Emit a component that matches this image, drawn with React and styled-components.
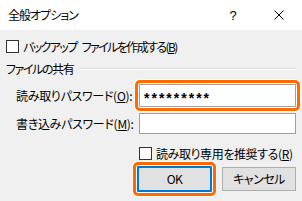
import React from "react";
import styled, { createGlobalStyle } from "styled-components";

const GlobalStyle = createGlobalStyle`
  html, body {
    margin: 0;
    padding: 0;
    background: #f0f0f0;
  }
  body {
    font-family: "Noto Sans CJK JP", "Noto Sans", sans-serif;
    font-size: 12px;
    color: #000;
    font-feature-settings: "palt";
  }
`;

const Window = styled.div`
  width: 302px;
  height: 201px;
  background: #f0f0f0;
  display: flex;
  flex-direction: column;
  overflow: hidden;
`;

const TitleBar = styled.div`
  height: 30px;
  background: #fff;
  display: flex;
  align-items: center;
  padding-left: 8px;
`;

const Title = styled.div`
  flex: 1;
  font-size: 12px;
  line-height: 16px;
  letter-spacing: -1px;
`;

const TitleButton = styled.div`
  width: 46px;
  height: 30px;
  display: flex;
  align-items: center;
  justify-content: center;
  font-family: "Liberation Sans", sans-serif;
  font-size: 13px;
`;

const Body = styled.div`
  padding: 10px 6px 0 6px;
  display: flex;
  flex-direction: column;
`;

const CheckRow = styled.div`
  display: flex;
  align-items: center;
  gap: 4px;
  height: 13px;
  margin-left: ${(p) => p.$indent || 0}px;
  margin-top: ${(p) => p.$top || 0}px;
  line-height: 13px;
  white-space: nowrap;
`;

const CheckText = styled.span`
  letter-spacing: ${(p) => p.$spacing ?? -0.4}px;
`;

const WordGap = styled.span`
  display: inline-block;
  width: 5px;
`;

const Box = styled.span`
  width: 13px;
  height: 13px;
  box-sizing: border-box;
  border: 1px solid #333;
  background: #fff;
  flex: none;
`;

const GroupHeader = styled.div`
  display: flex;
  align-items: center;
  gap: 6px;
  height: 14px;
  margin-top: 9px;
`;

const GroupTitle = styled.span`
  white-space: nowrap;
  line-height: 14px;
  letter-spacing: -1.4px;
`;

const GroupLine = styled.div`
  flex: 1;
  height: 1px;
  background: #dcdcdc;
  border-bottom: 1px solid #fff;
`;

const FormGrid = styled.div`
  display: grid;
  grid-template-columns: 123px 157px;
  row-gap: 6px;
  padding-left: 10px;
  margin-top: 8px;
  align-items: center;
`;

const FieldLabel = styled.span`
  white-space: nowrap;
  line-height: 16px;
  letter-spacing: -0.3px;
`;

const Field = styled.div`
  position: relative;
  height: ${(p) => p.$height || 22}px;
  box-sizing: border-box;
  border: 1px solid #a0a0a0;
  background: #fff;
  padding-left: 4px;
  display: flex;
  align-items: center;
  font-family: "Liberation Sans", sans-serif;
  font-size: 14px;
  font-weight: bold;
  letter-spacing: 2px;
  &::after {
    content: "";
    display: ${(p) => (p.$focused ? "block" : "none")};
    position: absolute;
    inset: -5px;
    border: 3px solid #ff6a00;
    border-radius: 5px;
    box-shadow: 0 0 0 1px #fff, inset 0 0 0 1px #fff;
    pointer-events: none;
  }
`;

const Stars = styled.span`
  position: relative;
  top: 2px;
`;

const ButtonRow = styled.div`
  display: flex;
  justify-content: flex-end;
  align-items: center;
  gap: 10px;
  margin-top: 6px;
`;

const Button = styled.div`
  position: relative;
  width: ${(p) => (p.$default ? 75 : 74)}px;
  height: ${(p) => (p.$default ? 26 : 24)}px;
  box-sizing: border-box;
  border: ${(p) => (p.$default ? "2px solid #0078d7" : "1px solid #adadad")};
  background: #e1e1e1;
  display: flex;
  align-items: center;
  justify-content: center;
  line-height: 14px;
  letter-spacing: -0.5px;
  &::after {
    content: "";
    display: ${(p) => (p.$default ? "block" : "none")};
    position: absolute;
    inset: -6px;
    border: 3px solid #ff6a00;
    border-radius: 5px;
    box-shadow: 0 0 0 1px #fff, inset 0 0 0 1px #fff;
  }
`;

const App = () => {
  return (
    <>
      <GlobalStyle />
      <Window>
        <TitleBar>
          <Title>全般オプション</Title>
          <TitleButton>?</TitleButton>
          <TitleButton>
            <svg width="10" height="10" viewBox="0 0 10 10">
              <path d="M0.5 0.5 L9.5 9.5 M9.5 0.5 L0.5 9.5" stroke="#000" strokeWidth="1" />
            </svg>
          </TitleButton>
        </TitleBar>
        <Body>
          <CheckRow>
            <Box />
            <CheckText $spacing={-1.6}>
              バックアップ<WordGap />ファイルを作成する(<u>B</u>)
            </CheckText>
          </CheckRow>
          <GroupHeader>
            <GroupTitle>ファイルの共有</GroupTitle>
            <GroupLine />
          </GroupHeader>
          <FormGrid>
            <FieldLabel>
              読み取りパスワード(<u>O</u>):
            </FieldLabel>
            <Field $focused $height={23}>
              <Stars>*********</Stars>
            </Field>
            <FieldLabel>
              書き込みパスワード(<u>M</u>):
            </FieldLabel>
            <Field $height={21} />
          </FormGrid>
          <CheckRow $indent={133} $top={13}>
            <Box />
            <CheckText $spacing={-0.4}>
              読み取り専用を推奨する(<u>R</u>)
            </CheckText>
          </CheckRow>
          <ButtonRow>
            <Button $default>OK</Button>
            <Button>キャンセル</Button>
          </ButtonRow>
        </Body>
      </Window>
    </>
  );
};

export default App;
